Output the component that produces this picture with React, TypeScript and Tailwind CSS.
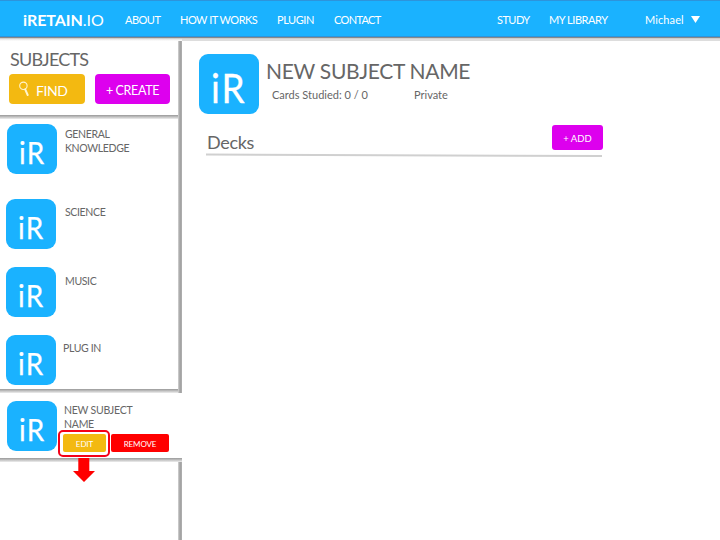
import React from "react";

function Tile({ className = "" }: { className?: string }) {
  return (
    <div className={`h-[50px] w-[50px] shrink-0 rounded-[9px] bg-[#1ab2ff] pl-[11.5px] pt-[12px] text-[31px] leading-[32px] text-white ${className}`}>
      <span className="inline-block origin-left scale-x-[0.9] tracking-[1.5px] [-webkit-text-stroke:0.25px_white]">iR</span>
    </div>
  );
}

function NavItem({ width, tracking, children }: { width: string; tracking: string; children: React.ReactNode }) {
  return <a className={`block shrink-0 whitespace-nowrap ${width} ${tracking}`}>{children}</a>;
}

function Header() {
  return (
    <header className="relative z-10 flex h-[37px] shrink-0 items-center border-y border-y-[#2d94dc] bg-[#1ab2ff] pl-[23px] pt-[2px] text-[11px] leading-[14px] text-white shadow-[0_1px_1px_#888]">
      <div className="w-[102px] shrink-0 whitespace-nowrap text-[16px] leading-[18px] tracking-[-0.05px]">
        <b>iRETAIN</b>.IO
      </div>
      <NavItem width="w-[55px]" tracking="tracking-[-0.5px]">ABOUT</NavItem>
      <NavItem width="w-[97px]" tracking="tracking-[-0.5px]">HOW IT WORKS</NavItem>
      <NavItem width="w-[57px]" tracking="tracking-[-0.45px]">PLUGIN</NavItem>
      <NavItem width="w-[163px]" tracking="tracking-[-0.65px]">CONTACT</NavItem>
      <NavItem width="w-[52px]" tracking="tracking-[-0.55px]">STUDY</NavItem>
      <NavItem width="w-[96px]" tracking="tracking-[-0.45px]">MY LIBRARY</NavItem>
      <NavItem width="w-[46px]" tracking="tracking-[0.1px]">Michael</NavItem>
      <svg className="h-[7px] w-[9px]" viewBox="0 0 9 7"><path d="M0 0H9L4.5 7Z" fill="white" /></svg>
    </header>
  );
}

function SubjectRow({ tile, label, height, pad }: { tile: string; label: React.ReactNode; height: string; pad: string }) {
  return (
    <div className={`flex shrink-0 items-start ${height}`}>
      <Tile className={tile} />
      <div className={`whitespace-nowrap text-[10.5px] leading-[14px] tracking-[-0.35px] ${pad}`}>{label}</div>
    </div>
  );
}

function Sidebar() {
  return (
    <aside className="flex w-[182px] shrink-0 flex-col">
      <div className="flex h-[352px] shrink-0">
        <div className="flex w-[178px] flex-col">
          <section className="h-[77px] shrink-0 pl-[9px] pt-[7px]">
            <h2 className="pl-[1px] text-[18px] leading-[22px] tracking-[-0.8px]">SUBJECTS</h2>
            <div className="mt-[4px] flex gap-[10px] text-white">
              <button className="flex h-[30px] w-[76px] items-center rounded-[4px] bg-[#f3b911] pl-[10px]">
                <svg className="h-[16px] w-[11px]" viewBox="0 0 11 16" fill="none" stroke="#fff4cf">
                  <circle cx="4.4" cy="4.8" r="3.7" strokeWidth="1.1" />
                  <path d="M6.2 8.3 8.7 14" strokeWidth="2" strokeLinecap="round" />
                </svg>
                <span className="pl-[6px] pt-[3px] text-[14px] leading-[18px] tracking-[-0.4px]">FIND</span>
              </button>
              <button className="h-[30px] w-[75px] rounded-[4px] bg-[#dd00ee] pt-[3px] text-[12.5px] leading-[18px] tracking-[-0.35px]">+ CREATE</button>
            </div>
            <div className="-ml-[9px] mt-[11px] h-[4px] bg-linear-to-b from-[#999] to-[#eee]" />
          </section>
          <SubjectRow tile="ml-[7px] mt-[6px]" height="h-[75px]" pad="pl-[8px] pt-[9px]" label={<>GENERAL<br />KNOWLEDGE</>} />
          <SubjectRow tile="ml-[6px] mt-[6px]" height="h-[68px]" pad="pl-[9px] pt-[12px]" label="SCIENCE" />
          <SubjectRow tile="ml-[6px] mt-[6px]" height="h-[67px]" pad="pl-[9px] pt-[13px]" label="MUSIC" />
          <SubjectRow tile="ml-[6px] mt-[7px]" height="h-[61px]" pad="pl-[7px] pt-[13px]" label="PLUG IN" />
          <div className="h-[4px] bg-linear-to-b from-[#999] to-[#eee]" />
        </div>
        <div className="w-[4px] bg-linear-to-r from-[#d5d5d5] via-[#a0a0a0] to-[#b0b0b0]" />
      </div>
      <section className="relative flex h-[69px] shrink-0">
        <Tile className="ml-[7px] mt-[8px]" />
        <div className="relative pl-[7px] pt-[10px] text-[10.5px] leading-[14px] tracking-[-0.25px]">
          NEW SUBJECT<br />NAME
          <div className="absolute left-[6px] top-[41px] flex w-[106px] gap-[5px] text-[8px] leading-[18px] tracking-[-0.1px] text-white">
            <button className="h-[18px] w-[43px] rounded-[2px] bg-[#f3b911] pt-[1px]">EDIT</button>
            <button className="h-[18px] w-[58px] rounded-[2px] bg-[#ff0000] pt-[1px]">REMOVE</button>
          </div>
          <div className="absolute left-[1px] top-[37px] h-[27px] w-[52px] rounded-[5px] border-2 border-[#f50018]" />
        </div>
        <div className="absolute bottom-0 left-0 h-[4px] w-[182px] bg-linear-to-b from-[#999] to-[#eee]" />
        <svg className="absolute left-[73px] top-[65px] h-[24px] w-[22px]" viewBox="0 0 22 24">
          <path d="M5.3 0H16.3V13H22L11 24 0 13H5.3Z" fill="#ff0000" />
        </svg>
      </section>
      <div className="ml-[178px] w-[4px] grow bg-linear-to-r from-[#d5d5d5] via-[#a0a0a0] to-[#b0b0b0]" />
    </aside>
  );
}

function Main() {
  return (
    <main className="grow pl-[17px] pt-[13px]">
      <div className="flex">
        <div className="h-[60px] w-[60px] shrink-0 rounded-[9px] bg-[#1ab2ff] pl-[12px] pt-[14px] text-[41px] leading-[40px] text-white">
          <span className="inline-block origin-left scale-x-[0.9] tracking-[2px] [-webkit-text-stroke:0.3px_white]">iR</span>
        </div>
        <div className="pl-[7px] pt-[4px]">
          <h1 className="whitespace-nowrap text-[21px] leading-[25px] tracking-[-0.3px]">NEW SUBJECT NAME</h1>
          <div className="flex pl-[6px] pt-[5px] text-[11px] leading-[14px]">
            <span className="w-[142px]">Cards Studied: 0 / 0</span>
            <span>Private</span>
          </div>
        </div>
      </div>
      <div className="ml-[7px] mt-[11px] flex w-[397px] justify-between">
        <h3 className="pl-[1px] pt-[6px] text-[18px] leading-[22px] tracking-[-0.3px]">Decks</h3>
        <button className="h-[25px] w-[51px] rounded-[3px] bg-[#dd00ee] pt-[2px] text-[9.5px] leading-[18px] text-white">+ ADD</button>
      </div>
      <svg className="ml-[7px] mt-[1px] -translate-y-px block h-[4px] w-[396px]" viewBox="0 0 396 4"><path d="M0 1.5 396 3" stroke="#d0d0d0" strokeWidth="2" /></svg>
    </main>
  );
}

export default function App() {
  return (
    <div className="flex h-[540px] w-[720px] flex-col overflow-hidden bg-white font-['Lato',sans-serif] text-[#666]">
      <Header />
      <div className="flex h-[4px] shrink-0">
        <div className="w-[182px] bg-linear-to-b from-[#ccc] to-white" />
        <div className="grow bg-[#ddd]" />
      </div>
      <div className="-mt-px flex h-[500px] pt-px">
        <Sidebar />
        <Main />
      </div>
    </div>
  );
}
